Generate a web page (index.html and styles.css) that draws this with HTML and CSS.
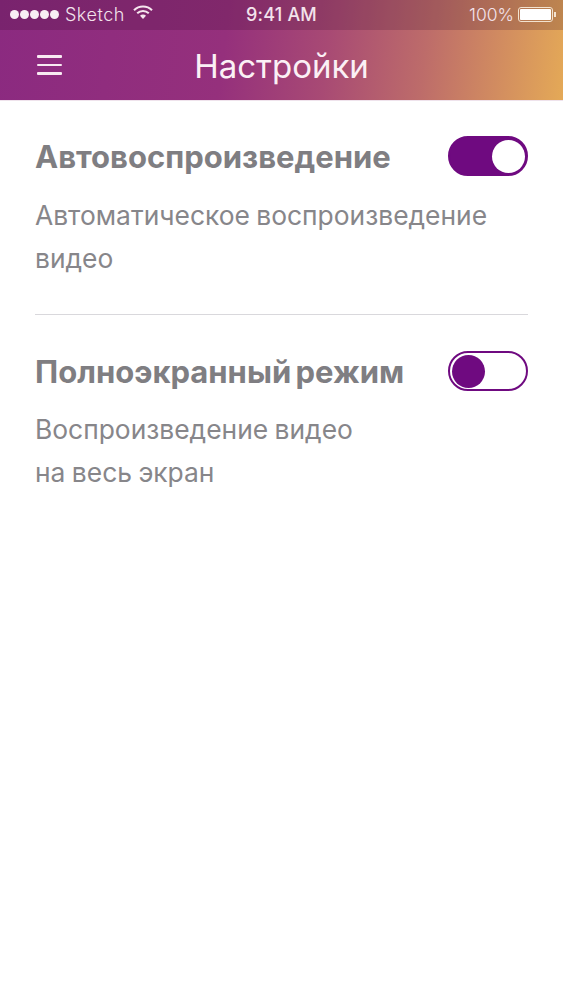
FILE: index.html
```html
<!DOCTYPE html>
<html lang="ru">
<head>
<meta charset="utf-8">
<title>Настройки</title>
<link rel="stylesheet" href="styles.css">
</head>
<body>
<header class="header">
  <div class="status">
    <div class="status-left">
      <div class="dots"><i></i><i></i><i></i><i></i><i></i></div>
      <span class="carrier">Sketch</span>
      <svg class="wifi" width="20" height="15" viewBox="0 0 20 15"><path d="M1 5.2a12.6 12.6 0 0 1 18 0" fill="none" stroke="#f6e6ee" stroke-width="2"/><path d="M4.2 8.3a8.2 8.2 0 0 1 11.6 0" fill="none" stroke="#f6e6ee" stroke-width="2"/><path d="M10 14l-3-3.3a4.2 4.2 0 0 1 6 0z" fill="#f6e6ee"/></svg>
    </div>
    <span class="time">9:41 AM</span>
    <div class="status-right">
      <span class="percent">100%</span>
      <div class="battery"><div class="battery-fill"></div></div>
      <div class="battery-tip"></div>
    </div>
  </div>
  <div class="nav">
    <div class="menu"><i></i><i></i><i></i></div>
    <h1 class="title">Настройки</h1>
  </div>
</header>
<main class="settings">
  <section class="item">
    <div class="item-head">
      <h2 class="item-title">Автовоспроизведение</h2>
      <div class="toggle toggle-on"><div class="knob"></div></div>
    </div>
    <p class="item-desc">Автоматическое воспроизведение<br>видео</p>
  </section>
  <section class="item">
    <div class="item-head">
      <h2 class="item-title">Полноэкранный режим</h2>
      <div class="toggle toggle-off"><div class="knob"></div></div>
    </div>
    <p class="item-desc">Воспроизведение видео<br>на весь экран</p>
  </section>
</main>
</body>
</html>
```
FILE: styles.css
```css
* { box-sizing: border-box; }
html, body { margin: 0; padding: 0; background: #fff; }
body { width: 563px; height: 1000px; overflow: hidden; font-family: Inter, Roboto, sans-serif; }
.header {
  height: 101px;
  background: linear-gradient(97deg, #8b2a80 0%, #95307c 40%, #a84a74 58%, #bd6c6a 75%, #e4a957 100%);
  border-bottom: 1px solid #efe3ec;
}
.status {
  height: 30px;
  background: rgba(50, 10, 40, 0.2);
  display: flex;
  align-items: center;
  justify-content: space-between;
  padding: 0 7px 2px 10px;
  color: #f3e3ec;
  font-size: 18px;
  position: relative;
}
.status-left, .status-right { display: flex; align-items: center; }
.dots { display: flex; gap: 1px; margin-right: 6px; }
.dots i { width: 9px; height: 9px; border-radius: 50%; background: #f8eef4; display: block; }
.carrier { margin-right: 8px; letter-spacing: 0.5px; font-weight: 300; }
.wifi { margin-bottom: 3px; }
.time { position: absolute; left: 246px; top: 4px; font-weight: 500; letter-spacing: 0.2px; }
.percent { margin-right: 4px; font-weight: 300; font-size: 17.5px; }
.battery { width: 35px; height: 15px; border: 1px solid #f3e3d0; border-radius: 3px; padding: 1px; }
.battery-fill { height: 100%; background: #fff; border-radius: 1px; }
.battery-tip { width: 2px; height: 5px; background: #f3e3d0; margin-left: 1px; }
.nav { height: 70px; display: flex; align-items: center; position: relative; }
.menu { margin-left: 37px; width: 25px; display: flex; flex-direction: column; gap: 6px; }
.menu i { display: block; height: 2.5px; background: #f8eaf2; border-radius: 1px; }
.title {
  margin: 0;
  position: absolute;
  left: 0; right: 0; top: 16px;
  text-align: center;
  font-weight: 400;
  font-size: 33px;
  line-height: 40px;
  color: #fbf0f5;
}
.settings { padding: 0 35px; }
.item { padding: 35px 0 34px; }
.item + .item { border-top: 1px solid #d9d8dc; padding-top: 36px; }
.item + .item .item-desc { margin-top: 17px; }
.item-head { display: flex; justify-content: space-between; align-items: center; height: 40px; }
.item-title { margin: 0; padding-top: 1px; font-size: 31px; font-weight: 700; color: #7f7e82; line-height: 40px; word-spacing: -3px; }
.item-desc { margin: 18px 0 0; font-size: 26.4px; line-height: 43px; color: #87868a; word-spacing: -1px; }
.toggle { width: 80px; height: 40px; border-radius: 20px; border: 2px solid #6f0a80; display: flex; align-items: center; padding: 0 1px 0 2px; }
.toggle-on { background: #6f0a80; justify-content: flex-end; }
.toggle-off { background: #fff; justify-content: flex-start; }
.knob { width: 33px; height: 33px; border-radius: 50%; }
.toggle-on .knob { background: #fff; }
.toggle-off .knob { background: #6f0a80; }
```
